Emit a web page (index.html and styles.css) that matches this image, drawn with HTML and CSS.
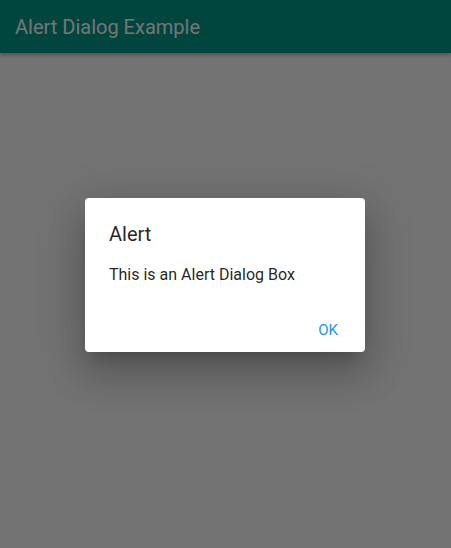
FILE: index.html
```html
<!DOCTYPE html>
<html>
<head>
<meta charset="utf-8">
<link rel="stylesheet" href="styles.css">
</head>
<body>
<div class="page">
  <header class="appbar"><span class="appbar-title">Alert Dialog Example</span></header>
  <main class="content"></main>
  <div class="scrim">
    <div class="dialog">
      <div class="dialog-title">Alert</div>
      <div class="dialog-body">This is an Alert Dialog Box</div>
      <div class="dialog-actions"><button class="btn">OK</button></div>
    </div>
  </div>
</div>
</body>
</html>
```
FILE: styles.css
```css
html, body { margin: 0; padding: 0; height: 100%; }
body { font-family: Roboto, "Noto Sans", sans-serif; }
.page { position: relative; height: 548px; width: 451px; background: #fafafa; display: flex; flex-direction: column; overflow: hidden; }
.appbar { height: 53px; background: #009688; display: flex; align-items: center; padding-left: 15px; box-shadow: 0 2px 4px rgba(0,0,0,0.3); flex-shrink: 0; }
.appbar-title { color: #fff; font-size: 20px; font-weight: 400; }
.content { flex: 1; }
.scrim { position: absolute; inset: 0; background: rgba(0,0,0,0.54); display: flex; align-items: center; justify-content: center; }
.dialog { width: 280px; background: #fff; border-radius: 4px; box-shadow: 0 11px 15px -7px rgba(0,0,0,0.2), 0 24px 38px 3px rgba(0,0,0,0.14), 0 9px 46px 8px rgba(0,0,0,0.12); margin-top: 2px; margin-right: 1px; }
.dialog-title { padding: 24px 24px 0; font-size: 20px; line-height: 24px; color: rgba(0,0,0,0.87); }
.dialog-body { padding: 18px 24px 24px; font-size: 16px; line-height: 22px; color: rgba(0,0,0,0.87); }
.dialog-actions { display: flex; justify-content: flex-end; padding: 2px 5px 4px; }
.btn { height: 36px; min-width: 64px; padding: 0 16px; border: none; background: transparent; color: #2196f3; font-family: Roboto, sans-serif; font-size: 15px; font-weight: 400; }
```
